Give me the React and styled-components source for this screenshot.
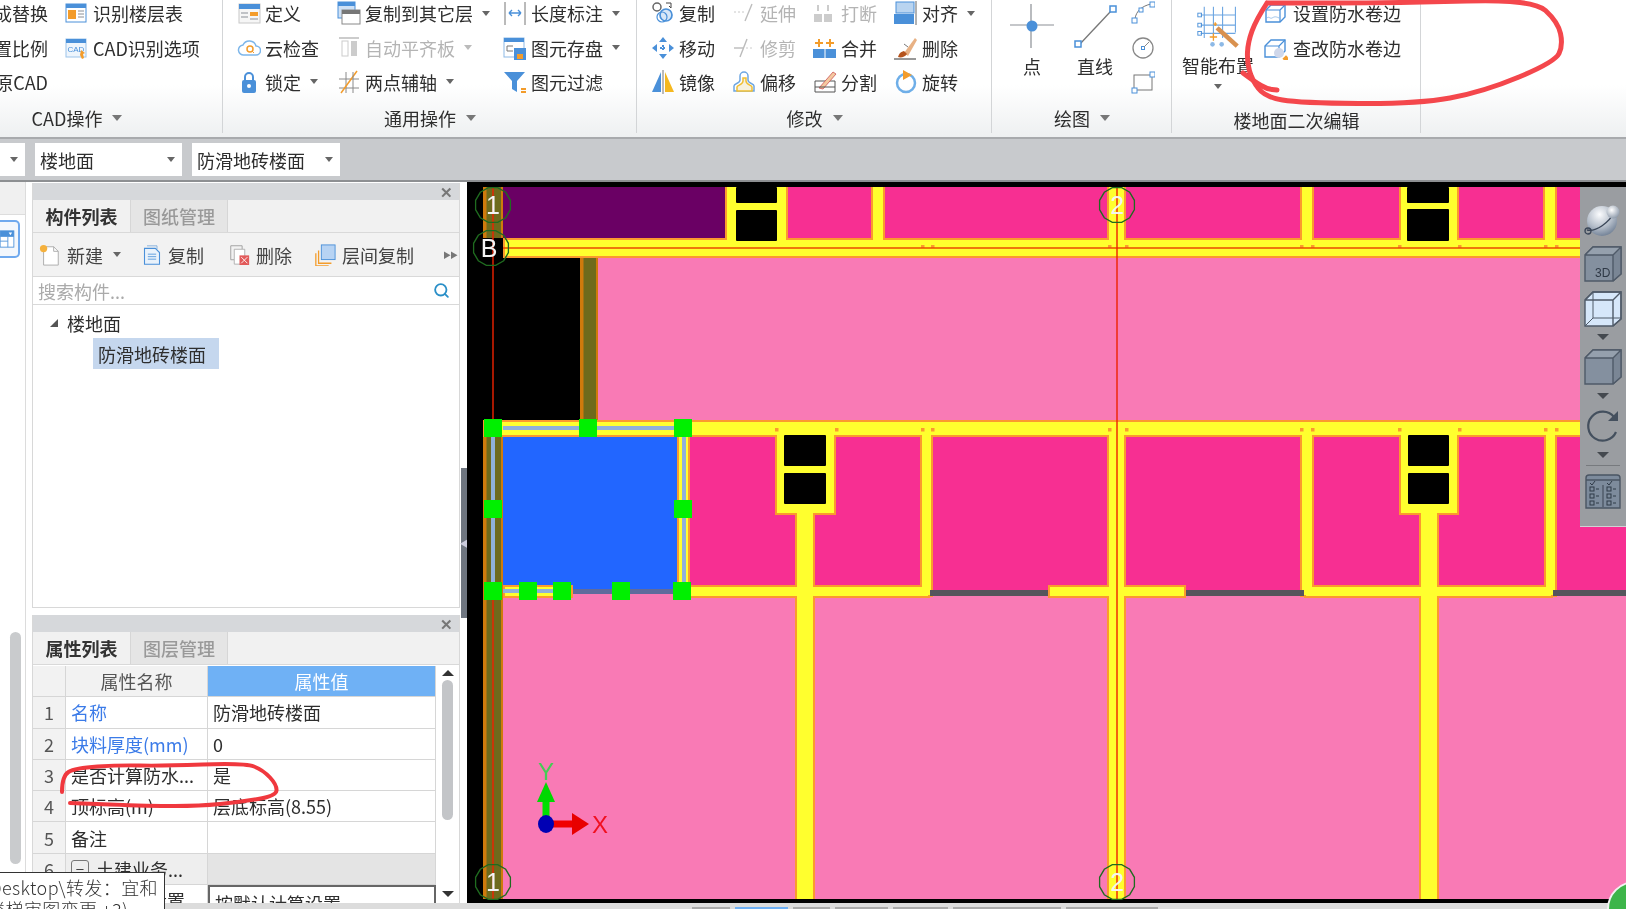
import React from "react";
import styled, { createGlobalStyle } from "styled-components";
import { Search } from "lucide-react";

const Global = createGlobalStyle`
  html, body { margin: 0; padding: 0; background: #fff; overflow: hidden; }
  * { box-sizing: border-box; }
  body { font-family: "Noto Sans CJK SC", "Noto Sans", sans-serif; color: #2e2e2e; }
`;

const Page = styled.div`
  position: relative; width: 1626px; height: 909px; overflow: hidden;
  display: flex; flex-direction: column; filter: blur(0.6px);
  font-size: 18px; line-height: 24px; letter-spacing: 0;
`;

/* ---------- ribbon ---------- */
const Ribbon = styled.div`
  height: 139px; flex: none; display: flex; overflow: hidden;
  background: linear-gradient(#fff 0, #fff 62%, #eef0f1 100%);
  border-bottom: 2px solid #a8aaad;
`;
const Group = styled.section`
  position: relative; width: ${p => p.$w}px; flex: none; height: 137px;
  display: flex; flex-direction: column;
  &::after { content: ""; position: absolute; right: 0; top: 0; bottom: 4px; width: 1px; background: #d3d5d7; }
`;
const GroupBody = styled.div`
  height: 102px; flex: none; display: flex; padding-left: ${p => p.$pad || 0}px;
  margin-top: -4px; gap: ${p => p.$gap || 0}px;
`;
const GroupLabel = styled.div`
  flex: 1; display: flex; align-items: center; justify-content: center; gap: 10px;
  padding-top: ${p => p.$low ? 5 : 1}px; padding-right: ${p => p.$shift || 0}px; color: #2e2e2e;
`;
const Col = styled.div`
  width: ${p => p.$w}px; flex: none; display: flex; flex-direction: column;
  ${p => p.$end ? "align-items: flex-end;" : ""}
`;
const Item = styled.div`
  height: 34.4px; flex: none; display: flex; align-items: center; gap: ${p => p.$gap ?? 4}px; white-space: nowrap;
  color: ${p => p.$off ? "#b4b4b4" : "#2e2e2e"};
`;
const Caret = styled.span`
  display: inline-block; width: 0; height: 0; flex: none;
  margin-left: ${p => p.$ml ?? 5}px;
  border-left: 4px solid transparent; border-right: 4px solid transparent;
  border-top: 5px solid ${p => p.$c || "#666"};
`;
const LabelCaret = styled.span`
  width: 0; height: 0; flex: none;
  border-left: 5px solid transparent; border-right: 5px solid transparent; border-top: 6px solid #777;
`;
const BigTool = styled.div`
  width: ${p => p.$w}px; flex: none; display: flex; flex-direction: column; align-items: center;
  padding-top: 8px; white-space: nowrap;
`;
const BigLabel = styled.div` margin-top: ${p => p.$mt ?? 6}px; `;
const BigCaret = styled(Caret)` margin-top: 7px; margin-left: 0; `;
const SmallTool = styled.div` height: 34.4px; flex: none; display: flex; align-items: center; justify-content: center; `;

/* ---------- mode bar ---------- */
const ModeBar = styled.div`
  height: 41px; flex: none; background: #c8cacd; display: flex; gap: 10px; align-items: center;
`;
const Select = styled.div`
  width: ${p => p.$w}px; height: 33px; background: #fff; display: flex; align-items: center;
  justify-content: space-between; padding: 0 7px 0 5px; color: #2e2e2e; flex: none;
`;

/* ---------- body ---------- */
const Body = styled.div`
  height: 723px; flex: none; display: flex; border-top: 2px solid #8d8f92; background: #fff;
`;
const Rail = styled.aside` width: 32px; flex: none; `;
const RailInner = styled.div`
  width: 26px; height: 100%; border-right: 1px solid #dcdcdc; display: flex; flex-direction: column;
`;
const RailHead = styled.div` height: 33px; background: #f0f0f0; border-bottom: 1px solid #ddd; flex: none; `;
const RailTab = styled.div`
  width: 20px; height: 38px; margin-top: 5px; flex: none; display: flex; align-items: center; justify-content: flex-end;
  border: 2px solid #6fa9ee; border-left: none; border-radius: 0 5px 5px 0; background: #f3f7fc; padding-right: 2px;
`;
const RailThumb = styled.div`
  width: 11px; height: 232px; margin: 374px 0 0 10px; background: #c9cbcd; border-radius: 6px; flex: none;
`;
const PanelCol = styled.div`
  width: 428px; flex: none; display: flex; flex-direction: column; gap: 7px; padding-top: 1px;
`;
const Panel = styled.section`
  height: ${p => p.$h}px; flex: none; display: flex; flex-direction: column; overflow: hidden;
  background: #fff; border-bottom: 1px solid #d8d8d8;
  border-left: 1px solid #d8d8d8; border-right: 1px solid #d8d8d8;
`;
const TitleBar = styled.div`
  height: 17px; flex: none; background: #d6d8db; display: flex; justify-content: flex-end; align-items: center;
  padding-right: 6px; color: #777; font-size: 15px; line-height: 15px; font-weight: 700;
`;
const Tabs = styled.div`
  height: 33px; flex: none; display: flex; background: #f1f1f1; border-bottom: 1px solid #d9d9d9;
`;
const Tab = styled.div`
  width: ${p => p.$w}px; display: flex; align-items: center; justify-content: center; flex: none;
  background: ${p => p.$on ? "#f1f1f1" : "#e5e5e5"};
  color: ${p => p.$on ? "#333" : "#999"}; font-weight: ${p => p.$on ? 700 : 500};
  border-right: 1px solid #d6d6d6;
`;
const Tools = styled.div`
  height: 44px; flex: none; background: #f2f2f2; display: flex; align-items: center; padding-left: 6px;
  border-bottom: 1px solid #d9d9d9; position: relative;
`;
const ToolBtn = styled.div`
  display: flex; align-items: center; gap: 6px; margin-right: ${p => p.$mr}px; white-space: nowrap; color: #444;
`;
const More = styled.span`
  margin-left: auto; margin-right: 2px; color: #777; font-size: 8px; letter-spacing: -1px;
`;
const SearchBar = styled.div`
  height: 28px; flex: none; display: flex; align-items: center; justify-content: space-between;
  padding: 0 9px 0 5px; color: #aaa; border-bottom: 1px solid #d9d9d9;
`;
const Tree = styled.div` flex: 1; padding-top: 2px; `;
const TreeRow = styled.div`
  height: 31px; display: flex; align-items: center; gap: 9px; padding-left: 17px;
`;
const Tri = styled.span`
  width: 0; height: 0; border-left: 8px solid transparent; border-bottom: 8px solid #555; flex: none;
`;
const TreeSel = styled.div`
  width: 126px; height: 31px; margin-left: 60px; background: #c5d7ee; padding-left: 5px; display: flex; align-items: center;
`;
const TableWrap = styled.div` flex: 1; display: flex; overflow: hidden; min-height: 0; padding-top: 1px; `;
const Table = styled.div`
  width: 403px; flex: none; display: grid; grid-template-columns: 33px 142px 228px; grid-auto-rows: 31.3px;
`;
const Cell = styled.div`
  display: flex; align-items: center; overflow: hidden; white-space: nowrap; gap: 7px;
  padding-left: ${p => p.$pl ?? 5}px;
  justify-content: ${p => p.$c ? "center" : "flex-start"};
  background: ${p => p.$bg || "#fff"};
  color: ${p => p.$color || "#2e2e2e"};
  border-right: 1px solid #d6d6d6; border-bottom: 1px solid #d6d6d6;
`;
const Boxed = styled(Cell)`
  border: 2px solid #666; border-bottom: none; align-items: flex-start; padding-top: 4px;
`;
const Minus = styled.span`
  width: 18px; height: 18px; border: 1px solid #777; border-radius: 3px; display: flex; align-items: center; justify-content: center;
  line-height: 14px; font-size: 15px; flex: none; color: #444;
`;
const VScroll = styled.div`
  flex: 1; display: flex; flex-direction: column; align-items: center; padding-top: 4px; background: #fff;
`;
const Up = styled.span`
  width: 0; height: 0; border-left: 6px solid transparent; border-right: 6px solid transparent; border-bottom: 6px solid #333; flex: none;
`;
const Down = styled.span`
  width: 0; height: 0; border-left: 6px solid transparent; border-right: 6px solid transparent; border-top: 6px solid #333; flex: none; margin-top: 71px;
`;
const VThumb = styled.div` width: 11px; height: 140px; margin-top: 4px; background: #c3c5c8; border-radius: 6px; flex: none; `;
const Splitter = styled.div`
  width: 7px; flex: none; display: flex; flex-direction: column; background: #fff;
`;
const SplitThumb = styled.div`
  height: 150px; margin-top: 286px; width: 6px; margin-left: 1px; background: #6f7680; flex: none;
  display: flex; align-items: center; justify-content: center; color: #ccd; font-size: 9px; line-height: 9px;
`;
const CanvasWrap = styled.main` flex: 1; position: relative; background: #000; overflow: hidden; `;
const CanvasSvg = styled.svg` display: block; `;
const ViewBar = styled.div`
  position: absolute; right: 0; top: 5px; width: 46px; height: 340px; background: #9a9da1;
  border-bottom: 1px solid #cfd1d4; display: flex; flex-direction: column; align-items: center; padding: 15px 0 0 0;
`;
const ViewIcon = styled.div` margin-top: ${p => p.$mt || 0}px; height: ${p => p.$h}px; flex: none; display: flex; `;
const ViewSep = styled.div` width: 34px; height: 1px; background: #777a7e; margin-top: 7px; flex: none; `;
const StatusStrip = styled.div`
  height: 6px; flex: none; background: #dcdcdc; display: flex; gap: 5px; padding: 4px 0 0 692px;
`;
const StatusTab = styled.div`
  width: ${p => p.$w}px; height: 2px; background: ${p => p.$on ? "#6fb1f5" : "#a9a9a9"}; flex: none;
`;
const Overlay = styled.svg`
  position: absolute; left: 0; top: 0; pointer-events: none;
`;
const Tip = styled.div`
  position: absolute; left: 0; bottom: 0; width: 165px; height: 37px; background: #fff; overflow: hidden;
  border-top: 1px solid #333; border-right: 1px solid #333; padding: 3px 6px 0 0; display: flex; flex-direction: column; align-items: flex-end;
  color: #333; line-height: 22px; white-space: nowrap; font-weight: 300; letter-spacing: .4px;
`;
const TipLine = styled.span` margin-right: ${p => p.$mr || 0}px; flex: none; `;
const Badge = styled.div`
  position: absolute; left: 1607px; top: 881px; width: 56px; height: 56px; border-radius: 50%;
  background: #3db54a; border: 2px solid #f2f2f2;
`;

/* ---------- icons ---------- */
const S = ({ s = 24, w, h, children, vb = "0 0 24 24" }) => (
  <svg width={w || s} height={h || s} viewBox={vb} fill="none" style={{ flex: "none" }}>{children}</svg>
);
const B = "#4a90d9", O = "#f39c2b", G = "#8a8f96";
const icons = {
  floors: <><rect x="2" y="3" width="20" height="18" fill="#fff" stroke={B} /><rect x="2" y="3" width="20" height="4" fill={B} /><rect x="4" y="9" width="8" height="9" fill={O} /><path d="M14 10h6M14 13h6M14 16h6" stroke={G} /></>,
  cad: <><rect x="2" y="3" width="20" height="18" fill="#eef5fc" stroke="#9cc3ea" /><rect x="2" y="3" width="20" height="4" fill={B} /><text x="3.5" y="16" fontSize="8" fill={B} fontFamily="Liberation Sans">CAD</text><path d="M17 14l4 3-2 1 1 4-2 1-2-4z" fill={O} /></>,
  define: <><rect x="2" y="3" width="21" height="19" fill="#f6f6f6" stroke="#c8c8c8" /><rect x="2" y="3" width="21" height="5" fill={B} /><rect x="13" y="11" width="8" height="4" fill={O} /><path d="M4 12h7M4 16h7M13 18h8" stroke={G} /></>,
  cloud: <><path d="M7 19a5 5 0 0 1-1-10 7 7 0 0 1 13 1 4.5 4.5 0 0 1 0 9z" fill="#fff" stroke="#7db6ea" strokeWidth="1.5" /><circle cx="13" cy="13" r="3" stroke={O} strokeWidth="1.5" /><path d="M15 15l2 2" stroke={O} /></>,
  lock: <><path d="M8 11V7a4 4 0 0 1 8 0v4" stroke={B} strokeWidth="2" /><rect x="5" y="10" width="14" height="13" rx="2" fill={B} /><circle cx="12" cy="16" r="2" fill="#fff" /></>,
  copyLayer: <><rect x="1" y="1" width="17" height="16" fill="#cfe1f5" stroke={B} /><rect x="1" y="1" width="17" height="4" fill={B} /><rect x="5" y="9" width="18" height="14" fill="#fff" stroke="#888" /><rect x="5" y="9" width="18" height="4" fill="#777" /></>,
  autoAlign: <><path d="M2 2h20" stroke="#ccc" strokeWidth="2" /><rect x="5" y="5" width="6" height="15" stroke="#ccc" fill="#fff" /><rect x="14" y="5" width="6" height="15" fill="#ccc" /></>,
  twoPoint: <><path d="M2 9h20M2 18h20M9 2v21" stroke="#8a8a8a" /><path d="M4 23L20 1" stroke={O} strokeWidth="1.5" /><path d="M16 2v21" stroke="#8a8a8a" /></>,
  dim: <><path d="M2 1v23M22 1v23" stroke="#777" /><path d="M6 12h12M6 12l3-3M6 12l3 3M18 12l-3-3M18 12l-3 3" stroke={B} strokeWidth="1.4" /></>,
  save: <><rect x="1" y="2" width="20" height="19" fill="#fff" stroke="#8db9e6" /><rect x="1" y="2" width="20" height="4" fill={B} /><path d="M4 10h6M4 10v5M4 15h6" stroke="#777" /><rect x="11" y="12" width="12" height="12" fill={B} /><rect x="14" y="18" width="6" height="5" fill={O} /></>,
  filter: <><path d="M1 2h21l-8 9v11l-5-3v-8z" fill={B} /><path d="M18 19h5M18 22h5" stroke={O} strokeWidth="2" /></>,
  copyC: <><circle cx="6" cy="6" r="4" fill="#fff" stroke="#666" strokeWidth="1.5" /><circle cx="15" cy="14" r="6" fill="#d7e7f7" stroke={B} strokeWidth="1.7" /><circle cx="11" cy="16" r="5" fill="none" stroke={B} strokeWidth="1.2" /><path d="M15 2h5v5M20 7l-2-2" stroke="#444" /></>,
  extend: <><path d="M2 11h10" stroke="#c8c8c8" strokeDasharray="2 2" /><path d="M13 20l7-17" stroke="#bdbdbd" strokeWidth="1.4" /></>,
  trim: <><path d="M2 12h9" stroke="#bbb" strokeWidth="1.4" /><path d="M14 12h8" stroke="#ccc" strokeDasharray="2 2" /><path d="M8 21l7-18" stroke="#bbb" strokeWidth="1.4" /></>,
  breakI: <><rect x="1" y="13" width="8" height="8" fill="#ccc" /><rect x="11" y="13" width="8" height="8" fill="#ccc" /><path d="M5 4v6M15 4v6" stroke="#ccc" strokeWidth="2" /></>,
  merge: <><rect x="0" y="13" width="23" height="9" fill={B} /><path d="M12 13v9" stroke="#fff" /><path d="M6 3v8M2 7h8M17 3v8M13 7h8" stroke={O} strokeWidth="2" /></>,
  alignI: <><rect x="2" y="1" width="18" height="11" fill="#b9d4f0" stroke={B} /><rect x="0" y="13" width="20" height="10" fill={B} /><path d="M22 0v24" stroke="#666" /></>,
  erase: <><path d="M10 17L21 2l2 2-9 16z" fill="#e8b184" /><path d="M14 11l-4-3" stroke="#777" /><path d="M4 21c1-3 2-5 6-6l3 3c-2 3-6 4-9 3z" fill="#b5531c" /><path d="M0 23h22" stroke="#333" /></>,
  move: <><path d="M12 1l4 5h-8zM12 23l4-5H8zM1 12l5-4v8zM23 12l-5-4v8z" fill={B} /><path d="M9 12h6M12 9v6" stroke={B} strokeWidth="2" strokeDasharray="2 1" /></>,
  mirror: <><path d="M10 2v20H1z" fill={B} /><path d="M14 2v20h9z" fill="#f5b81f" /><path d="M12 0v24" stroke="#777" /></>,
  offset: <><path d="M2 21v-5c0-3 6-2 6-6V6a4 4 0 0 1 8 0v4c0 4 6 3 6 6v5z" fill="#fff" stroke="#6da6e2" strokeWidth="1.5" /><path d="M5 21v-4c0-2 6-2 6-6V8h3v3c0 4 6 4 6 6v4z" fill="#f7f1dd" stroke="#f0be33" strokeWidth="1.5" /></>,
  split: <><path d="M2 22V11h20v11z" stroke="#555" /><path d="M6 18L20 2l3 2-13 15z" fill="#f4c9a0" stroke="#c55" strokeWidth=".8" /><path d="M2 17h20" stroke="#555" /></>,
  rotate: <><circle cx="12" cy="13" r="9" stroke="#6eaee8" strokeWidth="2.5" /><path d="M9 0l9 5-9 5z" fill={O} /></>,
  point: <><path d="M21 0v44M0 21h44" stroke="#8b8f95" strokeWidth="1.2" /><circle cx="22" cy="22" r="5.5" fill={B} /></>,
  line: <><path d="M7 40L38 7" stroke="#777" strokeWidth="1.3" /><rect x="2" y="37" width="6" height="6" fill="#fff" stroke={B} strokeWidth="1.5" /><rect x="37" y="2" width="6" height="6" fill="#fff" stroke={B} strokeWidth="1.5" /></>,
  arc: <><path d="M4 18C5 10 11 5 20 3" stroke="#777" /><rect x="1" y="17" width="5" height="5" fill="#fff" stroke={B} /><rect x="19" y="1" width="5" height="5" fill="#fff" stroke={B} /><rect x="8" y="7" width="4" height="4" fill="#fff" stroke={B} /></>,
  circ: <><circle cx="12" cy="12" r="10" fill="#fff" stroke="#888" strokeWidth="1.3" /><rect x="10.5" y="10.5" width="3" height="3" stroke={B} /><path d="M13 11l5-5" stroke="#888" /></>,
  rectI: <><rect x="3" y="5" width="18" height="15" stroke="#777" /><rect x="1" y="18" width="5" height="5" fill="#fff" stroke={B} /><rect x="19" y="2" width="5" height="5" fill="#fff" stroke={B} /></>,
  smart: <><path d="M8 3v34M18 3v34M28 3v34M4 12h38M4 23h38M4 32h38" stroke="#6da6e2" strokeWidth="1.2" /><path d="M42 3v28" stroke="#6da6e2" strokeWidth="1.2" /><rect x="1" y="10" width="4" height="4" stroke={B} /><rect x="1" y="21" width="4" height="4" stroke={B} /><rect x="1" y="30" width="4" height="4" stroke={B} /><circle cx="17" cy="44" r="2.5" fill="#8db9e6" /><circle cx="27" cy="44" r="2.5" fill="#8db9e6" /><path d="M22 26l22 20" stroke="#d9914f" strokeWidth="5" /><path d="M14 36h8M18 32v8M18 22h4M20 20v4" stroke={O} strokeWidth="1.4" /></>,
  setRoll: <><path d="M2 9l5-5h14v12l-5 5H2z" fill="#fff" stroke={B} strokeWidth="1.4" /><path d="M2 9h14v12M16 9l5-5" stroke={B} strokeWidth="1.2" /><path d="M3 17c2-2 3 1 5 0s3-2 7 0" stroke="#9cc3ea" /></>,
  editRoll: <><path d="M1 10l6-6h14v11l-6 6H1z" fill="#fff" stroke={B} strokeWidth="1.4" /><path d="M1 10h14v11M15 10l6-6" stroke={B} strokeWidth="1.2" /><circle cx="15" cy="17" r="5" fill="#cfd7ea" /><rect x="20" y="20" width="5" height="5" fill={O} transform="rotate(45 22 22)" /></>,
  newDoc: <><path d="M5 3h11l5 5v15H5z" fill="#fff" stroke="#aaa" /><path d="M16 3v5h5" stroke="#aaa" /><circle cx="5" cy="5" r="4" fill="#f5b13d" /></>,
  copyDoc: <><path d="M6 1h12v4" stroke="#7aa9dc" /><path d="M3 4h13l5 5v14H3z" fill="#e9f2fb" stroke={B} strokeWidth="1.3" /><path d="M7 11h10M7 14h10M7 17h10" stroke={B} /></>,
  delDoc: <><path d="M2 2h13v4" stroke="#999" /><path d="M2 2v16h4" stroke="#999" /><path d="M6 6h12v17H6z" fill="#fff" stroke="#aaa" /><rect x="12" y="13" width="11" height="11" fill="#e25a5a" /><path d="M14 15l7 7M21 15l-7 7" stroke="#fff" /></>,
  layerCopy: <><path d="M2 10v14h14M5 7v14h14" stroke={O} strokeWidth="1.4" /><rect x="8" y="1" width="15" height="16" fill="#b7d3f3" stroke={B} /></>,
  rail: <><rect x="0" y="1" width="16" height="19" fill="#fff" stroke={B} /><rect x="0" y="1" width="16" height="7" fill={B} /><path d="M0 13h9M9 8v12" stroke={B} /><path d="M10 3l4 0-2 3z" fill="#fff" /></>,
};
const Ic = ({ n, s, w, h, vb }) => <S s={s} w={w} h={h} vb={vb}>{icons[n]}</S>;

const Sphere = () => (
  <svg width="38" height="36" viewBox="0 0 38 36">
    <defs>
      <radialGradient id="sph" cx="42%" cy="28%" r="80%"><stop offset="0" stopColor="#fbfcfe" /><stop offset=".55" stopColor="#b4bdc9" /><stop offset="1" stopColor="#64758c" /></radialGradient>
      <radialGradient id="sph2" cx="40%" cy="35%" r="70%"><stop offset="0" stopColor="#fff" /><stop offset="1" stopColor="#8a97a8" /></radialGradient>
    </defs>
    <circle cx="18" cy="19" r="15" fill="url(#sph)" />
    <path d="M3 28C12 30 25 21 31 9" stroke="#3a4658" strokeWidth="1.4" fill="none" />
    <circle cx="4" cy="29" r="3" fill="none" stroke="#3a4658" strokeWidth="1.3" />
    <circle cx="29" cy="10" r="6.5" fill="url(#sph2)" />
  </svg>
);
const Cube = ({ kind }) => {
  const glass = kind === "glass";
  return (
    <svg width="38" height="36" viewBox="0 0 38 36" fill="none">
      <path d="M1 9l8-8h28v27l-8 7H1z" fill={glass ? "#d6e7fa" : "#84909f"} stroke="#4f5a68" strokeWidth="1.4" />
      {!glass && <path d="M1 9l8-8h28l-8 8z" fill="#95a0ad" />}
      {!glass && <path d="M29 9l8-8v27l-8 7z" fill="#7a8695" />}
      <path d="M1 9h28v26M29 9l8-8M1 9l8-8h28v27l-8 7" stroke="#4f5a68" strokeWidth="1.4" />
      {glass && <path d="M9 1v26h28M9 27l-8 8" stroke="#4f5a68" strokeWidth="1" />}
      {kind === "3d" && <text x="11" y="31" fontSize="12" fill="#2f3946" fontFamily="Liberation Sans">3D</text>}
    </svg>
  );
};
const ViewCaret = styled.span`
  width: 0; height: 0; margin-top: ${p => p.$mt}px; flex: none;
  border-left: 6px solid transparent; border-right: 6px solid transparent; border-top: 6px solid #44494f;
`;

/* ---------- canvas data ---------- */
const ORANGE = "#fb9a2e", YELLOW = "#ffff2e", PINK = "#f97ab5", HOT = "#f72f92";
const walls = [
  [503, 238, 1090, 20],
  [725, 180, 63, 63], [1399, 180, 60, 63], [871, 180, 14, 62], [1107, 180, 19, 62], [1300, 180, 14, 62], [1543, 180, 14, 62],
  [483, 420, 1110, 17],
  [775, 433, 61, 82], [795, 510, 20, 394], [920, 433, 13, 164], [1107, 433, 19, 471], [1300, 433, 14, 164],
  [1399, 433, 60, 82], [1419, 510, 20, 394], [1544, 433, 13, 164], [677, 433, 13, 164],
  [684, 585, 246, 13], [1048, 585, 138, 13], [1304, 585, 249, 13], [503, 585, 70, 13],
];
const blacks = [
  [736, 187, 41, 16], [736, 210, 41, 31], [1407, 187, 42, 16], [1407, 209, 42, 32],
  [784, 435, 42, 31], [784, 473, 42, 31], [1408, 435, 41, 31], [1408, 473, 41, 31],
];
const darks = [[930, 590, 118, 6], [1186, 590, 118, 6], [1553, 590, 80, 6]];
const olive = [[483, 187, 20, 51], [580, 258, 18, 162], [483, 437, 20, 462]];
const handles = [
  [493, 428], [588, 428], [683, 428], [493, 509], [683, 509], [493, 591], [528, 591], [562, 591], [621, 591], [682, 591],
];
const dots = [775, 835, 921, 931, 1108, 1125, 1300, 1311, 1398, 1458, 1544, 1555];
const axes = [[493, 205, "1", 493], [491, 248, "B", 489], [1117, 205, "2", 1117], [493, 882, "1", 493], [1117, 882, "2", 1117]];
const poly = (cx, cy, r) => Array.from({ length: 12 }, (_, i) => {
  const a = (i * Math.PI) / 6 + Math.PI / 12;
  return `${(cx + r * Math.cos(a)).toFixed(1)},${(cy + r * Math.sin(a)).toFixed(1)}`;
}).join(" ");
const smooth = pts => {
  let d = `M${pts[0][0]} ${pts[0][1]}`;
  for (let i = 1; i < pts.length - 1; i++) {
    const mx = (pts[i][0] + pts[i + 1][0]) / 2, my = (pts[i][1] + pts[i + 1][1]) / 2;
    d += ` Q${pts[i][0]} ${pts[i][1]} ${mx} ${my}`;
  }
  const l = pts[pts.length - 1];
  return d + ` L${l[0]} ${l[1]}`;
};
const ribbonMark = [[1267, 3], [1256, 20], [1248, 42], [1247, 62], [1252, 80], [1265, 97], [1300, 103], [1417, 104], [1483, 92], [1555, 62], [1563, 45], [1558, 22], [1533, -1], [1400, 3], [1267, 3]];
const ribbonTail = [[1243, 73], [1255, 82], [1267, 89], [1277, 90]];
const tableMark = [[62, 792], [62, 776], [75, 768], [120, 765], [160, 766], [245, 763], [263, 770], [277, 785], [276, 796], [240, 802], [200, 806], [150, 806], [70, 803]];

const Plan = () => (
  <CanvasSvg width="1159" height="721" viewBox="467 182 1159 721">
    <rect x="503" y="187" width="222" height="51" fill="#6a0064" />
    <rect x="725" y="187" width="900" height="51" fill={HOT} />
    <rect x="598" y="258" width="1030" height="162" fill={PINK} />
    <rect x="677" y="437" width="950" height="154" fill={HOT} />
    <rect x="503" y="591" width="1125" height="308" fill={PINK} />
    <rect x="503" y="437" width="174" height="152" fill="#2266ff" />
    {olive.map(([x, y, w, h], i) => (
      <g key={i}>
        <rect x={x} y={y} width={w} height={h} fill="#6e6a1c" />
        <rect x={x} y={y} width="3.5" height={h} fill="#cf7a0c" />
        <rect x={x + w - 2} y={y} width="2" height={h} fill="#cf7a0c" />
      </g>
    ))}
    {walls.map(([x, y, w, h], i) => <rect key={i} x={x} y={y} width={w} height={h} fill={ORANGE} />)}
    {walls.map(([x, y, w, h], i) => <rect key={i} x={x + 2} y={y + 2} width={w - 4} height={h - 4} fill={YELLOW} />)}
    <rect x="467" y="182" width="1159" height="5" fill="#000" />
    <rect x="467" y="899" width="1159" height="4" fill="#000" />
    {blacks.map(([x, y, w, h], i) => <rect key={i} x={x} y={y} width={w} height={h} fill="#000" rx="1" />)}
    {darks.map(([x, y, w, h], i) => <rect key={i} x={x} y={y} width={w} height={h} fill="#55555c" />)}
    <rect x="573" y="589" width="105" height="5" fill="#5f6b9c" />
    {dots.map(x => <rect key={x} x={x} y="428" width="3.5" height="3.5" fill={ORANGE} />)}
    {dots.slice(2).map(x => <rect key={x} x={x} y="245" width="3.5" height="3" fill={ORANGE} />)}
    <path d="M503 248H1593" stroke="#e84a00" strokeWidth="1.6" />
    <path d="M493 187V899M1117 187V899" stroke="#ee2200" strokeWidth="1.4" />
    <path d="M503 428H675M493 437V585M684 437V585M503 591H570" stroke="#8fb0d8" strokeWidth="4" />
    {handles.map(([x, y], i) => <rect key={i} x={x - 9} y={y - 9} width="18" height="18" fill="#00f000" />)}
    {axes.map(([x, y, t, tx], i) => (
      <g key={i}>
        <polygon points={poly(x, y, 18)} fill="none" stroke="#1f6b1f" strokeWidth="1.3" />
        <text x={tx} y={y + 9} textAnchor="middle" fontSize="25" fill="#f4f4f4" fontFamily="Liberation Sans">{t}</text>
      </g>
    ))}
    <path d="M546 824V800" stroke="#00e000" strokeWidth="7" />
    <path d="M537 802l9-20 9 20z" fill="#00d800" />
    <path d="M546 824H572" stroke="#f00000" strokeWidth="7" />
    <path d="M572 813l17 11-17 11z" fill="#e80000" />
    <ellipse cx="546" cy="824" rx="8" ry="9" fill="#0000b4" />
    <text x="546" y="780" textAnchor="middle" fontSize="24" fill="#44cc55" fontFamily="Liberation Sans">Y</text>
    <text x="600" y="833" textAnchor="middle" fontSize="24" fill="#f01020" fontFamily="Liberation Sans">X</text>
  </CanvasSvg>
);

const Tool = ({ n, children, off, caret, gap, s = 24 }) => (
  <Item $off={off} $gap={gap}>
    <Ic n={n} s={s} />
    <span>{children}</span>
    {caret && <Caret $c={off ? "#bbb" : "#666"} />}
  </Item>
);

const rows = [
  { i: 1, name: "名称", value: "防滑地砖楼面", blue: true },
  { i: 2, name: "块料厚度(mm)", value: "0", blue: true },
  { i: 3, name: "是否计算防水...", value: "是" },
  { i: 4, name: "顶标高(m)", value: "层底标高(8.55)" },
  { i: 5, name: "备注", value: "" },
];

export default function App() {
  return (
    <>
      <Global />
      <Page>
        <Ribbon>
          <Group $w={223}>
            <GroupBody $gap={16}>
              <Col $w={48} $end>
                <Item>成替换</Item>
                <Item>置比例</Item>
                <Item>原CAD</Item>
              </Col>
              <Col $w={150}>
                <Tool n="floors" gap={5}>识别楼层表</Tool>
                <Tool n="cad" gap={5}>CAD识别选项</Tool>
              </Col>
            </GroupBody>
            <GroupLabel $shift={69}>CAD操作<LabelCaret /></GroupLabel>
          </Group>
          <Group $w={414}>
            <GroupBody $pad={14}>
              <Col $w={100}>
                <Tool n="define">定义</Tool>
                <Tool n="cloud">云检查</Tool>
                <Tool n="lock" caret>锁定</Tool>
              </Col>
              <Col $w={166}>
                <Tool n="copyLayer" caret>复制到其它层</Tool>
                <Tool n="autoAlign" off caret>自动平齐板</Tool>
                <Tool n="twoPoint" caret>两点辅轴</Tool>
              </Col>
              <Col $w={130}>
                <Tool n="dim" caret>长度标注</Tool>
                <Tool n="save" caret>图元存盘</Tool>
                <Tool n="filter">图元过滤</Tool>
              </Col>
            </GroupBody>
            <GroupLabel>通用操作<LabelCaret /></GroupLabel>
          </Group>
          <Group $w={355}>
            <GroupBody $pad={14}>
              <Col $w={81}>
                <Tool n="copyC">复制</Tool>
                <Tool n="move">移动</Tool>
                <Tool n="mirror">镜像</Tool>
              </Col>
              <Col $w={81}>
                <Tool n="extend" off>延伸</Tool>
                <Tool n="trim" off>修剪</Tool>
                <Tool n="offset">偏移</Tool>
              </Col>
              <Col $w={81}>
                <Tool n="breakI" off>打断</Tool>
                <Tool n="merge">合并</Tool>
                <Tool n="split">分割</Tool>
              </Col>
              <Col $w={90}>
                <Tool n="alignI" caret>对齐</Tool>
                <Tool n="erase">删除</Tool>
                <Tool n="rotate">旋转</Tool>
              </Col>
            </GroupBody>
            <GroupLabel>修改<LabelCaret /></GroupLabel>
          </Group>
          <Group $w={180}>
            <GroupBody $pad={10} $gap={3}>
              <BigTool $w={60}>
                <S s={44} vb="0 0 44 44">{icons.point}</S>
                <BigLabel>点</BigLabel>
              </BigTool>
              <BigTool $w={60}>
                <S s={44} vb="0 0 44 44">{icons.line}</S>
                <BigLabel>直线</BigLabel>
              </BigTool>
              <Col $w={30}>
                <SmallTool><Ic n="arc" /></SmallTool>
                <SmallTool><Ic n="circ" /></SmallTool>
                <SmallTool><Ic n="rectI" /></SmallTool>
              </Col>
            </GroupBody>
            <GroupLabel>绘图<LabelCaret /></GroupLabel>
          </Group>
          <Group $w={249}>
            <GroupBody $pad={8} $gap={8}>
              <BigTool $w={76}>
                <S s={44} vb="0 0 46 48">{icons.smart}</S>
                <BigLabel $mt={5}>智能布置</BigLabel>
                <BigCaret />
              </BigTool>
              <Col $w={150}>
                <Tool n="setRoll" gap={5}>设置防水卷边</Tool>
                <Tool n="editRoll" gap={5}>查改防水卷边</Tool>
              </Col>
            </GroupBody>
            <GroupLabel $low>楼地面二次编辑</GroupLabel>
          </Group>
        </Ribbon>

        <ModeBar>
          <Select $w={25}><span /><Caret $ml={0} /></Select>
          <Select $w={147}>楼地面<Caret $ml={0} /></Select>
          <Select $w={148}>防滑地砖楼面<Caret $ml={0} /></Select>
        </ModeBar>

        <Body>
          <Rail>
            <RailInner>
              <RailHead />
              <RailTab><S s={18} vb="0 0 16 21">{icons.rail}</S></RailTab>
              <RailThumb />
            </RailInner>
          </Rail>
          <PanelCol>
            <Panel $h={425}>
              <TitleBar>✕</TitleBar>
              <Tabs>
                <Tab $w={98} $on>构件列表</Tab>
                <Tab $w={97}>图纸管理</Tab>
              </Tabs>
              <Tools>
                <ToolBtn $mr={21}><Ic n="newDoc" s={22} /> 新建 <Caret $ml={4} /></ToolBtn>
                <ToolBtn $mr={25}><Ic n="copyDoc" s={20} />复制</ToolBtn>
                <ToolBtn $mr={22}><Ic n="delDoc" s={21} />删除</ToolBtn>
                <ToolBtn $mr={0}><Ic n="layerCopy" s={22} />层间复制</ToolBtn>
                <More>▶▶</More>
              </Tools>
              <SearchBar>
                搜索构件...
                <Search size={17} color="#2a8fc8" strokeWidth={2.6} />
              </SearchBar>
              <Tree>
                <TreeRow><Tri />楼地面</TreeRow>
                <TreeSel>防滑地砖楼面</TreeSel>
              </Tree>
            </Panel>
            <Panel $h={289}>
              <TitleBar>✕</TitleBar>
              <Tabs>
                <Tab $w={98} $on>属性列表</Tab>
                <Tab $w={97}>图层管理</Tab>
              </Tabs>
              <TableWrap>
                <Table>
                  <Cell $bg="#f2f2f2" />
                  <Cell $bg="#f2f2f2" $c $pl={0} $color="#555">属性名称</Cell>
                  <Cell $bg="#6fb1f5" $c $pl={0} $color="#fff">属性值</Cell>
                  {rows.map(r => (
                    <React.Fragment key={r.i}>
                      <Cell $bg="#f2f2f2" $c $pl={0} $color="#555">{r.i}</Cell>
                      <Cell $color={r.blue ? "#3b7be8" : "#2e2e2e"}>{r.name}</Cell>
                      <Cell>{r.value}</Cell>
                    </React.Fragment>
                  ))}
                  <Cell $bg="#f2f2f2" $c $pl={0} $color="#555">6</Cell>
                  <Cell $bg="#eeeeee"><Minus>−</Minus>土建业务...</Cell>
                  <Cell $bg="#e4e4e4" />
                  <Cell $bg="#f2f2f2" $c $pl={0} $color="#555">7</Cell>
                  <Cell $pl={47}>计算设置</Cell>
                  <Boxed>按默认计算设置</Boxed>
                </Table>
                <VScroll>
                  <Up />
                  <VThumb />
                  <Down />
                </VScroll>
              </TableWrap>
            </Panel>
          </PanelCol>
          <Splitter><SplitThumb>◀</SplitThumb></Splitter>
          <CanvasWrap>
            <Plan />
            <ViewBar>
              <ViewIcon $h={36}><Sphere /></ViewIcon>
              <ViewIcon $mt={8} $h={36}><Cube kind="3d" /></ViewIcon>
              <ViewIcon $mt={9} $h={35}><Cube kind="glass" /></ViewIcon>
              <ViewCaret $mt={8} />
              <ViewIcon $mt={9} $h={35}><Cube kind="solid" /></ViewIcon>
              <ViewCaret $mt={9} />
              <ViewIcon $mt={11} $h={32}>
                <svg width="36" height="34" viewBox="0 0 36 34" fill="none">
                  <path d="M31 22A14.5 14.5 0 1 1 29 7" stroke="#44505e" strokeWidth="2.2" />
                  <path d="M33 1v10H23z" fill="#44505e" />
                </svg>
              </ViewIcon>
              <ViewCaret $mt={10} />
              <ViewSep />
              <ViewIcon $mt={8} $h={35}>
                <svg width="36" height="35" viewBox="0 0 36 35" fill="none">
                  <path d="M1 4q0-3 3-3h28q3 0 3 3v30H1z" fill="#7d8b9c" stroke="#4a5563" strokeWidth="1.4" />
                  <path d="M1 6h34M18 11v22" stroke="#4a5563" strokeWidth="1.3" />
                  <path d="M5 9l2 2 3-4M22 9l2 2 3-4" stroke="#2f3a47" />
                  {[13, 20, 27].map(y => (
                    <g key={y} stroke="#2f3a47">
                      <rect x="5" y={y} width="4" height="4" />
                      <rect x="22" y={y} width="4" height="4" />
                      <line x1="11" x2="14" y1={y + 2} y2={y + 2} />
                      <line x1="28" x2="31" y1={y + 2} y2={y + 2} />
                    </g>
                  ))}
                </svg>
              </ViewIcon>
            </ViewBar>
          </CanvasWrap>
        </Body>

        <StatusStrip>
          <StatusTab $w={38} />
          <StatusTab $w={53} $on />
          <StatusTab $w={37} />
          <StatusTab $w={53} />
          <StatusTab $w={55} />
          <StatusTab $w={108} />
          <StatusTab $w={92} />
        </StatusStrip>

        <Overlay width="1626" height="909" viewBox="0 0 1626 909" fill="none">
          <path d={smooth(ribbonMark)} stroke="#f4474c" strokeWidth="5" strokeLinecap="round" strokeLinejoin="round" />
          <path d={smooth(ribbonTail)} stroke="#f4474c" strokeWidth="5" strokeLinecap="round" />
          <path d={smooth(tableMark)} stroke="#f0383e" strokeWidth="4" strokeLinecap="round" strokeLinejoin="round" />
        </Overlay>

        <Tip>
          <TipLine>Desktop\转发：宜和</TipLine>
          <TipLine $mr={30}>楼梯审图变更 +3)</TipLine>
        </Tip>
        <Badge />
      </Page>
    </>
  );
}
